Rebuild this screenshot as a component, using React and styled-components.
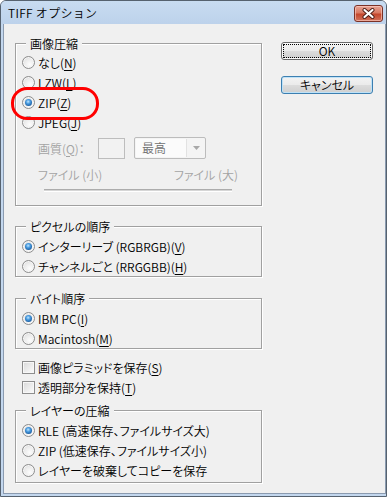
import styled, { createGlobalStyle } from "styled-components";

const GlobalStyle = createGlobalStyle`
  html, body {
    margin: 0;
    padding: 0;
    background: #ffffff;
  }
  body {
    font-family: "Noto Sans CJK JP", "Noto Sans", sans-serif;
    font-size: 12px;
    font-weight: 350;
    font-feature-settings: "palt";
    color: #000;
  }
`;

const Window = styled.div`
  position: relative;
  width: 387px;
  height: 497px;
  box-sizing: border-box;
  border: 1px solid #56626f;
  border-radius: 6px 6px 0 0;
  background: #c3d7ee;
  padding: 0 0 2px 2px;
  display: flex;
  flex-direction: column;
  overflow: hidden;
`;

const TitleBar = styled.div`
  height: 23px;
  flex: none;
  display: flex;
  align-items: flex-start;
  background: linear-gradient(#c8dcf1, #bdd2eb);
  margin-left: -2px;
  padding-left: 7px;
`;

const Title = styled.div`
  line-height: 23px;
  font-size: 12px;
  font-feature-settings: normal;
  letter-spacing: 0.3px;
`;

const CloseButton = styled.div`
  margin: 4px 3px 0 auto;
  width: 29px;
  height: 17px;
  box-sizing: border-box;
  border: 1px solid #7b3227;
  border-radius: 3px;
  background: linear-gradient(#e6a495 0%, #d97a63 45%, #c4472c 55%, #d1735c 100%);
  box-shadow: inset 0 0 0 1px rgba(255, 210, 200, 0.6);
  display: grid;
  place-items: center;
`;

const Client = styled.div`
  flex: 1;
  display: flex;
  background: #f0f0f0;
  border: 1px solid #8b9bb0;
  border-top: none;
  padding-left: 11px;
`;

const LeftColumn = styled.div`
  width: 247px;
  padding-top: 19px;
  display: flex;
  flex-direction: column;
`;

const RightColumn = styled.div`
  margin-left: 19px;
  padding-top: 18px;
  display: flex;
  flex-direction: column;
  gap: 16px;
`;

const GroupBox = styled.div`
  position: relative;
  box-sizing: border-box;
  border: 1px solid #a0a0a0;
  box-shadow: 1px 1px 0 #fff, inset 1px 1px 0 #fff;
  margin-top: ${(p) => p.$top || 0}px;
  padding: ${(p) => p.$padTop || 9}px 0 ${(p) => p.$padBottom || 0}px 6px;
`;

const Caption = styled.span`
  position: absolute;
  top: -8px;
  left: 10px;
  padding: 0 4px;
  line-height: 15px;
  background: #f0f0f0;
`;

const Row = styled.label`
  height: 20px;
  display: flex;
  align-items: center;
  gap: 3px;
  white-space: nowrap;
  color: ${(p) => (p.$disabled ? "#a3a3a3" : "#000")};
`;

const RadioMark = styled.span`
  flex: none;
  width: 13px;
  height: 13px;
  box-sizing: border-box;
  border-radius: 50%;
  border: 1px solid #8d8d8d;
  background: radial-gradient(circle at 62% 68%, #fdfdfd 0%, #eaeaea 55%, #cdcdcd 100%);
  box-shadow: inset 0 0 0 1px #f6f6f6;
  display: grid;
  place-items: center;

  &::after {
    content: "";
    display: ${(p) => (p.$checked ? "block" : "none")};
    width: 7px;
    height: 7px;
    border-radius: 50%;
    background: radial-gradient(circle at 45% 38%, #bfe6ff 0%, #4a9ce0 35%, #15569a 80%, #0f3f73 100%);
  }
`;

const CheckMark = styled.span`
  flex: none;
  width: 13px;
  height: 13px;
  box-sizing: border-box;
  border: 1px solid #8d8d8d;
  background: linear-gradient(135deg, #d9d9d9 0%, #f2f2f2 70%, #fbfbfb 100%);
  box-shadow: inset 0 0 0 1px #f7f7f7;
`;

const Key = styled.span`
  text-decoration: underline;
  text-underline-offset: 2px;
`;

const CheckList = styled.div`
  margin-top: 8px;
  padding-left: 7px;
`;

const QualityRow = styled.div`
  margin: 5px 0 0 16px;
  height: 22px;
  display: flex;
  align-items: center;
  color: #a3a3a3;
`;

const QualityLabel = styled.span`
  width: 60px;
`;

const NumberBox = styled.div`
  width: 27px;
  height: 21px;
  box-sizing: border-box;
  border: 1px solid #bdbdbd;
  background: #f2f2f2;
`;

const SelectBox = styled.div`
  margin-left: 9px;
  width: 72px;
  height: 22px;
  box-sizing: border-box;
  border: 1px solid #bcbcbc;
  border-radius: 2px;
  background: #f4f4f4;
  display: flex;
  color: #6f6f6f;
`;

const SelectValue = styled.div`
  flex: 1;
  margin: 1px;
  padding-left: 6px;
  background: #fbfbfb;
  border-right: 1px solid #e2e2e2;
  line-height: 18px;
`;

const SelectArrow = styled.div`
  width: 17px;
  display: grid;
  place-items: center;
`;

const SizeLabels = styled.div`
  margin: 9px 0 0 16px;
  width: 200px;
  height: 14px;
  line-height: 14px;
  display: flex;
  justify-content: space-between;
  color: #a3a3a3;
`;

const SliderTrack = styled.div`
  margin: 7px 0 0 22px;
  width: 188px;
  height: 1px;
  border-top: 1px solid #acacac;
  border-bottom: 1px solid #ffffff;
  background: #d6d6d6;
`;

const DialogButton = styled.button`
  width: 92px;
  height: 18px;
  padding: 0;
  font: inherit;
  font-size: 12px;
  line-height: 14px;
  color: #000;
  border-radius: 3px;
  border: 1px solid ${(p) => (p.$hot ? "#3c7fb1" : "#6a6a6a")};
  background: linear-gradient(#f3f3f3 0%, #ebebeb 48%, #dcdcdc 52%, #cfcfcf 100%);
  box-shadow: ${(p) =>
    p.$hot ? "inset 0 0 0 1px #bfe2f7" : "inset 0 0 0 1px #fbfbfb"};
  outline: ${(p) => (p.$focus ? "1px dotted #000" : "none")};
  outline-offset: -3px;
`;

const Highlight = styled.div`
  position: absolute;
  left: 10px;
  top: 86px;
  width: 88px;
  height: 33px;
  box-sizing: border-box;
  border: 3px solid #ff0000;
  border-radius: 16px;
  pointer-events: none;
`;

const Radio = ({ checked, children, disabled }) => (
  <Row $disabled={disabled}>
    <RadioMark $checked={checked} />
    <span>{children}</span>
  </Row>
);

const Check = ({ children }) => (
  <Row>
    <CheckMark />
    <span>{children}</span>
  </Row>
);

export default function App() {
  return (
    <>
      <GlobalStyle />
      <Window>
        <TitleBar>
          <Title>TIFF オプション</Title>
          <CloseButton>
            <svg width="13" height="11" viewBox="0 0 13 11">
              <path d="M2.5 2 L10.5 9 M10.5 2 L2.5 9" stroke="#4a1c14" strokeWidth="4" strokeLinecap="round" />
              <path d="M2.5 2 L10.5 9 M10.5 2 L2.5 9" stroke="#ffffff" strokeWidth="2.2" strokeLinecap="round" />
            </svg>
          </CloseButton>
        </TitleBar>
        <Client>
          <LeftColumn>
            <GroupBox $padTop={8} $padBottom={13}>
              <Caption>画像圧縮</Caption>
              <Radio>なし(<Key>N</Key>)</Radio>
              <Radio>LZW(<Key>L</Key>)</Radio>
              <Radio checked>ZIP(<Key>Z</Key>)</Radio>
              <Radio>JPEG(<Key>J</Key>)</Radio>
              <QualityRow>
                <QualityLabel>画質(<Key>Q</Key>)：</QualityLabel>
                <NumberBox />
                <SelectBox>
                  <SelectValue>最高</SelectValue>
                  <SelectArrow>
                    <svg width="7" height="4" viewBox="0 0 7 4">
                      <path d="M0 0 H7 L3.5 4 Z" fill="#a8a8a8" />
                    </svg>
                  </SelectArrow>
                </SelectBox>
              </QualityRow>
              <SizeLabels>
                <span>ファイル (小)</span>
                <span>ファイル (大)</span>
              </SizeLabels>
              <SliderTrack />
            </GroupBox>

            <GroupBox $top={20}>
              <Caption>ピクセルの順序</Caption>
              <Radio checked>インターリーブ (RGBRGB)(<Key>V</Key>)</Radio>
              <Radio>チャンネルごと (RRGGBB)(<Key>H</Key>)</Radio>
            </GroupBox>

            <GroupBox $top={21}>
              <Caption>バイト順序</Caption>
              <Radio checked>IBM PC(<Key>I</Key>)</Radio>
              <Radio>Macintosh(<Key>M</Key>)</Radio>
            </GroupBox>

            <CheckList>
              <Check>画像ピラミッドを保存(<Key>S</Key>)</Check>
              <Check>透明部分を保持(<Key>T</Key>)</Check>
            </CheckList>

            <GroupBox $top={13} $padBottom={2}>
              <Caption>レイヤーの圧縮</Caption>
              <Radio checked>RLE (高速保存、ファイルサイズ大)</Radio>
              <Radio>ZIP (低速保存、ファイルサイズ小)</Radio>
              <Radio>レイヤーを破棄してコピーを保存</Radio>
            </GroupBox>
          </LeftColumn>

          <RightColumn>
            <DialogButton $focus>OK</DialogButton>
            <DialogButton $hot>キャンセル</DialogButton>
          </RightColumn>
        </Client>
        <Highlight />
      </Window>
    </>
  );
}
